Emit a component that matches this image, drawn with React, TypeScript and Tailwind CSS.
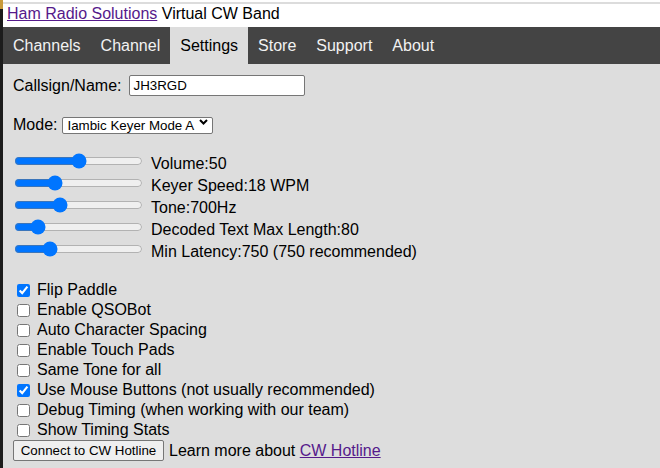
import { useState } from "react";

const tabs = ["Channels", "Channel", "Settings", "Store", "Support", "About"];

const sliders = [
  { label: "Volume:50", min: 0, max: 100, value: 50 },
  { label: "Keyer Speed:18 WPM", min: 5, max: 50, value: 18 },
  { label: "Tone:700Hz", min: 300, max: 1500, value: 700 },
  { label: "Decoded Text Max Length:80", min: 0, max: 550, value: 80 },
  { label: "Min Latency:750 (750 recommended)", min: 0, max: 3000, value: 750 },
];

const options = [
  { label: "Flip Paddle", checked: true },
  { label: "Enable QSOBot", checked: false },
  { label: "Auto Character Spacing", checked: false },
  { label: "Enable Touch Pads", checked: false },
  { label: "Same Tone for all", checked: false },
  { label: "Use Mouse Buttons (not usually recommended)", checked: true },
  { label: "Debug Timing (when working with our team)", checked: false },
  { label: "Show Timing Stats", checked: false },
];

function Chevron() {
  return (
    <svg width="9" height="6" viewBox="0 0 9 6" className="pointer-events-none absolute right-[5px] top-[6px]">
      <path d="M1 1l3.5 3.5L8 1" fill="none" stroke="#000" strokeWidth="2" />
    </svg>
  );
}

export default function App() {
  const [values, setValues] = useState(sliders.map((s) => s.value));
  const [checks, setChecks] = useState(options.map((o) => o.checked));

  return (
    <div className="flex min-h-[468px] bg-[#dddddd] font-['Liberation_Sans',Arial,sans-serif] text-[16px] text-black">
      {/* window edge */}
      <div className="flex w-[3px] flex-col bg-[#1c1c1c]">
        <div className="h-[9px] bg-[#c99a3a]" />
      </div>

      <div className="flex-1">
        <div className="bg-white pt-[2px]">
          <div className="h-[25px] border-t-2 border-[#dcdcdc] pl-[4px] leading-[20px]">
            <a href="#" className="text-[#551a8b] underline">Ham Radio Solutions</a> Virtual CW Band
          </div>
        </div>

        <nav className="flex h-[37px] bg-[#444444]">
          {tabs.map((t) => (
            <div
              key={t}
              className={
                t === "Settings"
                  ? "flex items-center bg-[#dddddd] px-[10px] text-black"
                  : "flex items-center px-[10px] text-[#f2f2f2]"
              }
            >
              {t}
            </div>
          ))}
        </nav>

        <div className="pl-[10px]">
          <div className="mt-[11px] flex h-[21px] items-center">
            <span>Callsign/Name:</span>
            <input
              defaultValue="JH3RGD"
              className="ml-[8px] h-[21px] w-[176px] rounded-[2px] border border-[#767676] bg-white px-[3px] text-[13.33px] outline-none"
            />
          </div>

          <div className="mt-[20px] flex h-[17px] items-center">
            <span>Mode:</span>
            <div className="relative ml-[5px]">
              <select className="h-[17px] w-[151px] appearance-none rounded-[2px] border border-[#767676] bg-white pl-[4px] text-[13.33px] leading-[15px] outline-none">
                <option>Iambic Keyer Mode A</option>
                <option>Iambic Keyer Mode B</option>
                <option>Straight Key</option>
              </select>
              <Chevron />
            </div>
          </div>

          <div className="mt-[17px]">
            {sliders.map((s, i) => (
              <div key={s.label} className="flex h-[22px] items-start">
                <input
                  type="range"
                  min={s.min}
                  max={s.max}
                  value={values[i]}
                  onChange={(e) => {
                    const v = [...values];
                    v[i] = Number(e.target.value);
                    setValues(v);
                  }}
                  className="mt-[3px] ml-[1px] h-[16px] w-[129px]"
                />
                <span className="ml-[8px] pt-[5px] leading-[18px]">{s.label}</span>
              </div>
            ))}
          </div>

          <div className="mt-[20px]">
            {options.map((o, i) => (
              <label key={o.label} className="flex h-[20px] items-center">
                <input
                  type="checkbox"
                  checked={checks[i]}
                  onChange={() => {
                    const c = [...checks];
                    c[i] = !c[i];
                    setChecks(c);
                  }}
                  className="ml-[4px] mr-[7px] h-[13px] w-[13px]"
                />
                <span className="leading-[18px]">{o.label}</span>
              </label>
            ))}
          </div>

          <div className="flex h-[21px] items-center">
            <button className="h-[21px] w-[151px] rounded-[2px] border border-[#767676] bg-[#efefef] text-[13.33px] leading-[16px]">
              Connect to CW Hotline
            </button>
            <span className="ml-[5px]">
              Learn more about <a href="#" className="text-[#551a8b] underline">CW Hotline</a>
            </span>
          </div>
        </div>
      </div>
    </div>
  );
}
